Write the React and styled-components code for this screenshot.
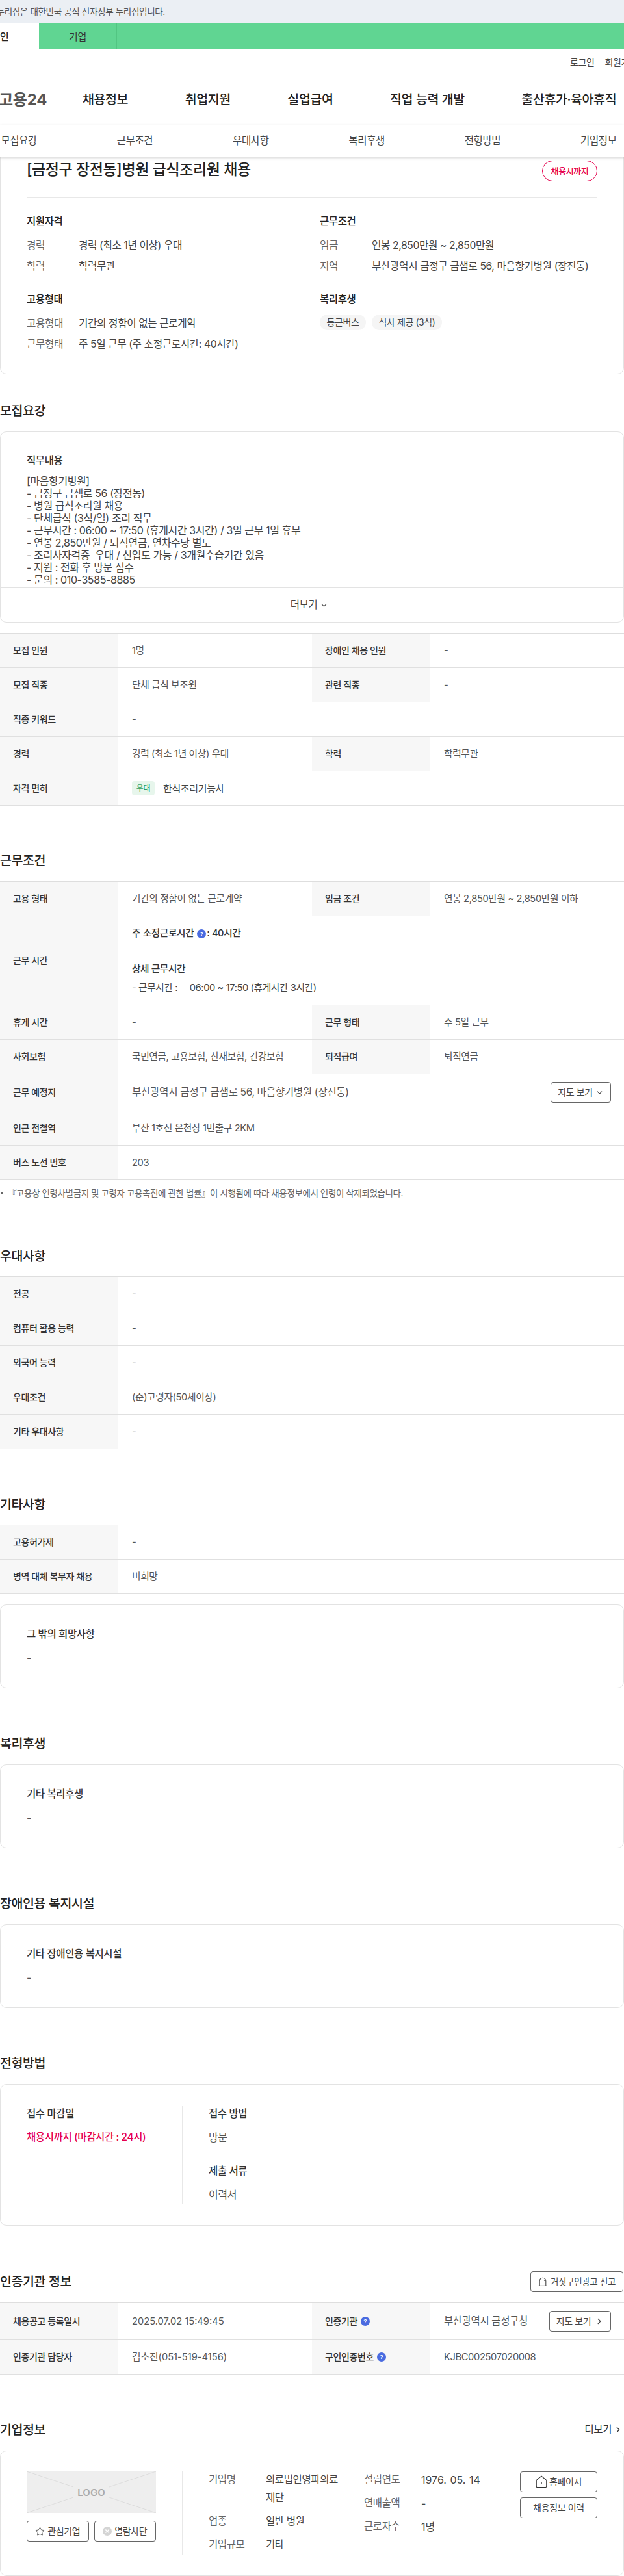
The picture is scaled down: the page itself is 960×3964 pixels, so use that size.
import React from "react";
import styled, { createGlobalStyle } from "styled-components";
import { ChevronDown, ChevronRight, Star } from "lucide-react";

const Global = createGlobalStyle`
  * { box-sizing: border-box; }
  html, body { margin: 0; padding: 0; background: #fff; overflow-x: hidden; }
  body {
    width: 960px;
    font-family: Inter, "Noto Sans CJK KR", "Noto Sans", sans-serif;
    line-height: 1.4;
    color: #333;
    letter-spacing: -0.025em;
  }
`;

const Page = styled.div`
  width: 960px;
  height: 3964px;
  overflow: hidden;
`;

const GovBanner = styled.div`
  height: 36px;
  line-height: 36px;
  background: #ebeff4;
  font-size: 13.6px;
  color: #555;
  white-space: nowrap;
`;
const GovText = styled.span`
  display: inline-block;
  margin-left: -21px;
`;

const Audience = styled.div`
  display: flex;
  height: 40px;
  background: #60d592;
`;
const AudienceTab = styled.div`
  flex: none;
  width: ${(p) => p.$w}px;
  margin-left: ${(p) => p.$ml || 0}px;
  display: flex;
  align-items: center;
  justify-content: center;
  font-size: 15px;
  background: ${(p) => (p.$on ? "#fff" : "transparent")};
  color: ${(p) => (p.$on ? "#222" : "#333")};
  font-weight: ${(p) => (p.$on ? 500 : 400)};
  border-right: ${(p) => (p.$on ? "none" : "1px solid #52c582")};
`;

const Util = styled.div`
  display: flex;
  height: 40px;
  align-items: center;
  gap: 16px;
  padding-left: 877px;
  font-size: 14px;
  color: #444;
  white-space: nowrap;
`;

const MainNav = styled.nav`
  display: flex;
  align-items: center;
  height: 76px;
  white-space: nowrap;
  margin-left: -2px;
`;
const BrandText = styled.div`
  width: 129px;
  flex: none;
  font-size: 24px;
  font-weight: 700;
  color: #555;
  letter-spacing: -0.01em;
`;
const NavLink = styled.a`
  flex: none;
  margin-right: 87.5px;
  font-size: 19.5px;
  font-weight: 500;
  color: #222;
`;

const Tabs = styled.div`
  position: relative;
  z-index: 2;
  height: 49px;
  display: flex;
  background: #fff;
  border-top: 1px solid #e8e8e8;
  box-shadow: 0 2px 4px rgba(0, 0, 0, 0.18);
`;
const TabsInner = styled.div`
  display: flex;
  flex: none;
  width: 1070px;
  margin-left: -60px;
`;
const Tab = styled.div`
  flex: 1;
  display: flex;
  align-items: center;
  justify-content: center;
  font-size: 15.5px;
  color: #444;
`;

const Card = styled.div`
  background: #fff;
  border: 1px solid #e3e3e3;
  border-radius: 10px;
`;
const SummaryCard = styled(Card)`
  margin-top: -20px;
  height: 355px;
  padding: 25px 40px 0;
`;
const SummaryHead = styled.div`
  display: flex;
  justify-content: space-between;
  align-items: flex-start;
  height: 57px;
  border-bottom: 1px solid #e8e8e8;
`;
const JobTitle = styled.h1`
  margin: 0;
  font-size: 23px;
  line-height: 28px;
  font-weight: 500;
  color: #222;
`;
const StatusBadge = styled.div`
  width: 85px;
  height: 32px;
  border: 1px solid #e6004d;
  border-radius: 16px;
  font-size: 13px;
  line-height: 30px;
  text-align: center;
  color: #e6004d;
  font-weight: 500;
`;
const SummaryGrid = styled.div`
  display: grid;
  grid-template-columns: 451px 1fr;
  row-gap: 24px;
  padding-top: 26px;
`;
const BlockHead = styled.div`
  font-size: 15.5px;
  line-height: 22px;
  font-weight: 500;
  color: #222;
  margin-bottom: 10px;
`;
const SumRow = styled.div`
  display: flex;
  height: 32px;
  align-items: center;
  font-size: 15.7px;
  white-space: nowrap;
`;
const SumLabel = styled.span`
  width: 80px;
  flex: none;
  color: #666;
`;
const SumValue = styled.span`
  color: #444;
`;
const Chips = styled.div`
  display: flex;
  gap: 9px;
  padding-top: 2px;
`;
const Chip = styled.span`
  height: 24px;
  padding: 0 10.5px;
  border-radius: 12px;
  background: #f5f5f5;
  font-size: 14px;
  line-height: 24px;
  color: #444;
`;

const SectionTitle = styled.h2`
  margin: ${(p) => p.$mt ?? 70}px 0 ${(p) => p.$mb ?? 17}px;
  font-size: 19.5px;
  line-height: 30px;
  font-weight: 500;
  color: #222;
`;

const DescCard = styled(Card)`
  height: 294px;
  overflow: hidden;
  display: flex;
  flex-direction: column;
`;
const DescBody = styled.div`
  height: 240px;
  flex: none;
  padding: 33px 40px 0;
  overflow: hidden;
  border-bottom: 1px solid #e3e3e3;
`;
const CardHead = styled.div`
  font-size: 15.5px;
  line-height: 22px;
  font-weight: 500;
  color: #333;
`;
const DescText = styled.div`
  margin-top: 11px;
  font-size: 16px;
  line-height: 19px;
  color: #444;
  white-space: pre;
`;
const MoreBar = styled.div`
  flex: 1;
  display: flex;
  align-items: center;
  justify-content: center;
  gap: 4px;
  padding-right: 8px;
  font-size: 15.5px;
  color: #444;
`;

const Table = styled.div`
  margin-top: ${(p) => p.$mt ?? 0}px;
  border-top: 1px solid #dedede;
`;
const TRow = styled.div`
  display: grid;
  grid-template-columns: ${(p) =>
    p.$single ? "182px 1fr" : "182px 298px 182px 1fr"};
  height: ${(p) => p.$h ?? 53}px;
  border-bottom: 1px solid #e0e0e0;
`;
const TLabel = styled.div`
  display: flex;
  align-items: center;
  gap: 5px;
  padding-left: 20px;
  background: #f7f7f7;
  font-size: 14px;
  font-weight: 500;
  color: #333;
  white-space: nowrap;
`;
const TValue = styled.div`
  display: flex;
  align-items: center;
  padding: 0 20px 0 21px;
  font-size: ${(p) => p.$size ?? 14.7}px;
  letter-spacing: ${(p) => (p.$plain ? "0" : "-0.025em")};
  color: #555;
  white-space: nowrap;
  justify-content: ${(p) => (p.$between ? "space-between" : "flex-start")};
`;
const FavorTag = styled.span`
  width: 35px;
  height: 22px;
  margin-right: 13px;
  border-radius: 4px;
  background: #e7f6ec;
  color: #2f9e5e;
  font-size: 12px;
  line-height: 22px;
  text-align: center;
`;
const LicenseName = styled.span`
  font-size: 15px;
  color: #444;
`;
const HoursCell = styled.div`
  display: flex;
  flex-direction: column;
  justify-content: center;
  padding-left: 21px;
  font-size: 14.7px;
  color: #444;
  white-space: nowrap;
`;
const HoursHead = styled.div`
  display: flex;
  align-items: center;
  height: 22px;
  font-weight: 500;
  color: #333;
  margin-bottom: ${(p) => p.$mb ?? 0}px;
`;
const HoursLine = styled.div`
  height: 22px;
  line-height: 22px;
  margin-top: 6px;
  white-space: pre;
`;
const Help = styled.span`
  flex: none;
  width: 14px;
  height: 14px;
  margin: ${(p) => (p.$inline ? "0 1px 0 5px" : "0")};
  border-radius: 50%;
  background: #4a6be0;
  color: #fff;
  font-size: 9px;
  font-weight: 700;
  line-height: 14px;
  text-align: center;
  font-family: "Liberation Sans", sans-serif;
  letter-spacing: 0;
`;
const OutlineBtn = styled.button`
  display: inline-flex;
  flex: none;
  align-items: center;
  justify-content: center;
  gap: ${(p) => p.$gap ?? 4}px;
  width: ${(p) => (p.$w ? `${p.$w}px` : "auto")};
  height: 32px;
  padding: 0;
  border: 1px solid #666;
  border-radius: 4px;
  background: #fff;
  font: inherit;
  font-size: 14px;
  letter-spacing: -0.025em;
  color: #444;
  white-space: nowrap;
`;
const Note = styled.div`
  display: flex;
  align-items: center;
  gap: 7px;
  height: 20px;
  margin-top: 10px;
  padding-left: 1px;
  font-size: 13.5px;
  color: #666;
  white-space: nowrap;
`;
const Dot = styled.i`
  width: 4px;
  height: 4px;
  border-radius: 50%;
  background: #666;
`;

const TextCard = styled(Card)`
  height: 129px;
  margin-top: ${(p) => p.$mt ?? 0}px;
  padding: 34px 40px 0;
`;
const CardValue = styled.div`
  margin-top: 14px;
  font-size: 16px;
  line-height: 22px;
  color: #555;
`;

const ProcessCard = styled(Card)`
  display: flex;
  height: 218px;
  padding: 32px 40px 0;
`;
const ProcessLeft = styled.div`
  width: 240px;
  height: 152px;
  padding-top: 2px;
  border-right: 1px solid #e8e8e8;
`;
const ProcessRight = styled.div`
  padding: 2px 0 0 40px;
`;
const Deadline = styled(CardValue)`
  color: #e6004d;
  font-size: 15.5px;
  font-weight: 500;
`;
const ProcessHead = styled(CardHead)`
  margin-top: ${(p) => p.$mt ?? 0}px;
`;

const TitleRow = styled.div`
  display: flex;
  justify-content: space-between;
  align-items: center;
  height: 32px;
  margin: 70px 0 16px;
`;
const TitleInline = styled(SectionTitle)`
  margin: 0;
`;
const ReportBtn = styled(OutlineBtn)`
  width: 143px;
  gap: 5px;
  margin-right: 1px;
  font-size: 13.5px;
`;
const MoreLink = styled.div`
  display: flex;
  align-items: center;
  gap: 3px;
  padding-right: 2px;
  font-size: 15.5px;
  color: #333;
`;

const CompanyHead = styled.div`
  display: flex;
  justify-content: space-between;
  align-items: center;
  height: 30px;
  margin: 70px 0 17px;
`;
const CompanyCard = styled(Card)`
  display: flex;
  height: 193px;
  padding: 31px 40px 0;
`;
const CompanyLeft = styled.div`
  flex: none;
  width: 240px;
  height: 128px;
  border-right: 1px solid #e8e8e8;
`;
const LogoBox = styled.div`
  position: relative;
  width: 199px;
  height: 64px;
  background: #eee;
  display: flex;
  align-items: center;
  justify-content: center;
  font-size: 15px;
  font-weight: 600;
  letter-spacing: 0;
  color: #aaa;
`;
const LogoLines = styled.svg`
  position: absolute;
  inset: 0;
`;
const LogoBtns = styled.div`
  display: flex;
  gap: 8px;
  width: 199px;
  margin-top: 12px;
`;
const CompanyCols = styled.div`
  display: grid;
  grid-template-columns: 239px 152px;
  padding-left: 40px;
  margin-top: -1px;
`;
const InfoCol = styled.div`
  display: flex;
  flex-direction: column;
  gap: 8px;
`;
const InfoRow = styled.div`
  display: flex;
  font-size: 15.5px;
  line-height: 28px;
`;
const InfoLabel = styled.span`
  flex: none;
  width: 88px;
  color: #666;
`;
const InfoValue = styled.span`
  width: 118px;
  color: #444;
`;
const InfoPlain = styled.span`
  color: #444;
  white-space: nowrap;
  font-size: 16px;
  letter-spacing: 0;
  word-spacing: 1px;
`;
const CompanyBtns = styled.div`
  display: flex;
  flex-direction: column;
  gap: 8px;
  margin-left: auto;
`;

const Row2 = ({ a, b, c, d }) => (
  <TRow>
    <TLabel>{a}</TLabel>
    <TValue>{b}</TValue>
    <TLabel>{c}</TLabel>
    <TValue>{d}</TValue>
  </TRow>
);
const Row1 = ({ a, b, h }) => (
  <TRow $single $h={h}>
    <TLabel>{a}</TLabel>
    <TValue>{b}</TValue>
  </TRow>
);

const BellIcon = () => (
  <svg width="14" height="16" viewBox="0 0 14 16" fill="none" stroke="#444" strokeWidth="1.1">
    <path d="M2.2 14V7a4.8 4.8 0 0 1 9.6 0v7" />
    <path d="M0.6 14.4h12.8" />
    <path d="M9 5.2a2.6 2.6 0 0 1 .6 1.4" />
  </svg>
);
const HomeIcon = () => (
  <svg width="18" height="20" viewBox="0 0 18 20" fill="none" stroke="#333" strokeWidth="1.2" strokeLinejoin="round">
    <path d="M1.2 7.6 9 1.2l7.8 6.4V17a1.6 1.6 0 0 1-1.6 1.6H2.8A1.6 1.6 0 0 1 1.2 17z" />
    <path d="M9 10.5v3.5" strokeWidth="1.4" />
  </svg>
);
const BlockIcon = () => (
  <svg width="14" height="14" viewBox="0 0 14 14">
    <circle cx="7" cy="7" r="7" fill="#d4d4d4" />
    <path d="M4.4 4.4l5.2 5.2M9.6 4.4l-5.2 5.2" stroke="#fff" strokeWidth="1.4" />
  </svg>
);

const desc = `[마음향기병원]
- 금정구 금샘로 56 (장전동)
- 병원 급식조리원 채용
- 단체급식 (3식/일) 조리 직무
- 근무시간 : 06:00 ~ 17:50 (휴게시간 3시간) / 3일 근무 1일 휴무
- 연봉 2,850만원 / 퇴직연금, 연차수당 별도
- 조리사자격증  우대 / 신입도 가능 / 3개월수습기간 있음
- 지원 : 전화 후 방문 접수
- 문의 : 010-3585-8885`;

export default function App() {
  return (
    <Page>
      <Global />
      <GovBanner>
        <GovText>이 누리집은 대한민국 공식 전자정부 누리집입니다.</GovText>
      </GovBanner>
      <Audience>
        <AudienceTab $on $w={120} $ml={-60}>개인</AudienceTab>
        <AudienceTab $w={120}>기업</AudienceTab>
      </Audience>
      <Util>
        <span>로그인</span>
        <span>회원가입</span>
      </Util>
      <MainNav>
        <BrandText>고용24</BrandText>
        <NavLink>채용정보</NavLink>
        <NavLink>취업지원</NavLink>
        <NavLink>실업급여</NavLink>
        <NavLink>직업 능력 개발</NavLink>
        <NavLink>출산휴가·육아휴직</NavLink>
      </MainNav>
      <Tabs>
        <TabsInner>
          {["모집요강", "근무조건", "우대사항", "복리후생", "전형방법", "기업정보"].map((t) => (
            <Tab key={t}>{t}</Tab>
          ))}
        </TabsInner>
      </Tabs>

      <SummaryCard>
        <SummaryHead>
          <JobTitle>[금정구 장전동]병원 급식조리원 채용</JobTitle>
          <StatusBadge>채용시까지</StatusBadge>
        </SummaryHead>
        <SummaryGrid>
          <div>
            <BlockHead>지원자격</BlockHead>
            <SumRow><SumLabel>경력</SumLabel><SumValue>경력 (최소 1년 이상) 우대</SumValue></SumRow>
            <SumRow><SumLabel>학력</SumLabel><SumValue>학력무관</SumValue></SumRow>
          </div>
          <div>
            <BlockHead>근무조건</BlockHead>
            <SumRow><SumLabel>임금</SumLabel><SumValue>연봉 2,850만원 ~ 2,850만원</SumValue></SumRow>
            <SumRow><SumLabel>지역</SumLabel><SumValue>부산광역시 금정구 금샘로 56, 마음향기병원 (장전동)</SumValue></SumRow>
          </div>
          <div>
            <BlockHead>고용형태</BlockHead>
            <SumRow><SumLabel>고용형태</SumLabel><SumValue>기간의 정함이 없는 근로계약</SumValue></SumRow>
            <SumRow><SumLabel>근무형태</SumLabel><SumValue>주 5일 근무 (주 소정근로시간: 40시간)</SumValue></SumRow>
          </div>
          <div>
            <BlockHead>복리후생</BlockHead>
            <Chips>
              <Chip>통근버스</Chip>
              <Chip>식사 제공 (3식)</Chip>
            </Chips>
          </div>
        </SummaryGrid>
      </SummaryCard>

      <SectionTitle $mt={41}>모집요강</SectionTitle>
      <DescCard>
        <DescBody>
          <CardHead>직무내용</CardHead>
          <DescText>{desc}</DescText>
        </DescBody>
        <MoreBar>더보기 <ChevronDown size={13} strokeWidth={2} /></MoreBar>
      </DescCard>
      <Table $mt={16}>
        <Row2 a="모집 인원" b="1명" c="장애인 채용 인원" d="-" />
        <Row2 a="모집 직종" b="단체 급식 보조원" c="관련 직종" d="-" />
        <Row1 a="직종 키워드" b="-" />
        <Row2 a="경력" b="경력 (최소 1년 이상) 우대" c="학력" d="학력무관" />
        <Row1
          a="자격 면허"
          b={
            <>
              <FavorTag>우대</FavorTag>
              <LicenseName>한식조리기능사</LicenseName>
            </>
          }
        />
      </Table>

      <SectionTitle $mt={69}>근무조건</SectionTitle>
      <Table>
        <Row2 a="고용 형태" b="기간의 정함이 없는 근로계약" c="임금 조건" d="연봉 2,850만원 ~ 2,850만원 이하" />
        <TRow $single $h={137}>
          <TLabel>근무 시간</TLabel>
          <HoursCell>
            <HoursHead $mb={33}>주 소정근로시간<Help $inline>?</Help>: 40시간</HoursHead>
            <HoursHead>상세 근무시간</HoursHead>
            <HoursLine>- 근무시간 :     06:00 ~ 17:50 (휴게시간 3시간)</HoursLine>
          </HoursCell>
        </TRow>
        <Row2 a="휴게 시간" b="-" c="근무 형태" d="주 5일 근무" />
        <Row2 a="사회보험" b="국민연금, 고용보험, 산재보험, 건강보험" c="퇴직급여" d="퇴직연금" />
        <TRow $single $h={57}>
          <TLabel>근무 예정지</TLabel>
          <TValue $between $size={15.7}>
            부산광역시 금정구 금샘로 56, 마음향기병원 (장전동)
            <OutlineBtn $w={93}>지도 보기 <ChevronDown size={13} /></OutlineBtn>
          </TValue>
        </TRow>
        <Row1 a="인근 전철역" b="부산 1호선 온천장 1번출구 2KM" />
        <Row1 a="버스 노선 번호" b="203" />
      </Table>
      <Note>
        <Dot />『고용상 연령차별금지 및 고령자 고용촉진에 관한 법률』이 시행됨에 따라 채용정보에서 연령이 삭제되었습니다.
      </Note>

      <SectionTitle $mt={72} $mb={16}>우대사항</SectionTitle>
      <Table>
        <Row1 a="전공" b="-" />
        <Row1 a="컴퓨터 활용 능력" b="-" />
        <Row1 a="외국어 능력" b="-" />
        <Row1 a="우대조건" b="(준)고령자(50세이상)" />
        <Row1 a="기타 우대사항" b="-" />
      </Table>

      <SectionTitle $mb={16}>기타사항</SectionTitle>
      <Table>
        <Row1 a="고용허가제" b="-" />
        <Row1 a="병역 대체 복무자 채용" b="비희망" />
      </Table>
      <TextCard $mt={16}>
        <CardHead>그 밖의 희망사항</CardHead>
        <CardValue>-</CardValue>
      </TextCard>

      <SectionTitle>복리후생</SectionTitle>
      <TextCard>
        <CardHead>기타 복리후생</CardHead>
        <CardValue>-</CardValue>
      </TextCard>

      <SectionTitle>장애인용 복지시설</SectionTitle>
      <TextCard>
        <CardHead>기타 장애인용 복지시설</CardHead>
        <CardValue>-</CardValue>
      </TextCard>

      <SectionTitle>전형방법</SectionTitle>
      <ProcessCard>
        <ProcessLeft>
          <CardHead>접수 마감일</CardHead>
          <Deadline>채용시까지 (마감시간 : 24시)</Deadline>
        </ProcessLeft>
        <ProcessRight>
          <CardHead>접수 방법</CardHead>
          <CardValue>방문</CardValue>
          <ProcessHead $mt={30}>제출 서류</ProcessHead>
          <CardValue>이력서</CardValue>
        </ProcessRight>
      </ProcessCard>

      <TitleRow>
        <TitleInline>인증기관 정보</TitleInline>
        <ReportBtn><BellIcon />거짓구인광고 신고</ReportBtn>
      </TitleRow>
      <Table>
        <TRow $h={57}>
          <TLabel>채용공고 등록일시</TLabel>
          <TValue $plain>2025.07.02 15:49:45</TValue>
          <TLabel>인증기관 <Help>?</Help></TLabel>
          <TValue $between $size={15.5}>
            부산광역시 금정구청
            <OutlineBtn $w={95} $gap={6}>지도 보기 <ChevronRight size={14} strokeWidth={2.4} /></OutlineBtn>
          </TValue>
        </TRow>
        <TRow>
          <TLabel>인증기관 담당자</TLabel>
          <TValue $plain>김소진(051-519-4156)</TValue>
          <TLabel>구인인증번호 <Help>?</Help></TLabel>
          <TValue>KJBC002507020008</TValue>
        </TRow>
      </Table>

      <CompanyHead>
        <TitleInline>기업정보</TitleInline>
        <MoreLink>더보기 <ChevronRight size={14} /></MoreLink>
      </CompanyHead>
      <CompanyCard>
        <CompanyLeft>
          <LogoBox>
            <LogoLines width="199" height="64" viewBox="0 0 199 64" stroke="#ddd" strokeWidth="1">
              <path d="M0 0 72 24M199 0 127 24M0 64 72 40M199 64 127 40" />
            </LogoLines>
            LOGO
          </LogoBox>
          <LogoBtns>
            <OutlineBtn $w={95.5}><Star size={15} strokeWidth={1.3} />관심기업</OutlineBtn>
            <OutlineBtn $w={95.5}><BlockIcon />열람차단</OutlineBtn>
          </LogoBtns>
        </CompanyLeft>
        <CompanyCols>
          <InfoCol>
            <InfoRow><InfoLabel>기업명</InfoLabel><InfoValue>의료법인영파의료재단</InfoValue></InfoRow>
            <InfoRow><InfoLabel>업종</InfoLabel><InfoValue>일반 병원</InfoValue></InfoRow>
            <InfoRow><InfoLabel>기업규모</InfoLabel><InfoValue>기타</InfoValue></InfoRow>
          </InfoCol>
          <InfoCol>
            <InfoRow><InfoLabel>설립연도</InfoLabel><InfoPlain>1976. 05. 14</InfoPlain></InfoRow>
            <InfoRow><InfoLabel>연매출액</InfoLabel><InfoPlain>-</InfoPlain></InfoRow>
            <InfoRow><InfoLabel>근로자수</InfoLabel><InfoPlain>1명</InfoPlain></InfoRow>
          </InfoCol>
        </CompanyCols>
        <CompanyBtns>
          <OutlineBtn $w={119} $gap={3}><HomeIcon />홈페이지</OutlineBtn>
          <OutlineBtn $w={119}>채용정보 이력</OutlineBtn>
        </CompanyBtns>
      </CompanyCard>
    </Page>
  );
}
